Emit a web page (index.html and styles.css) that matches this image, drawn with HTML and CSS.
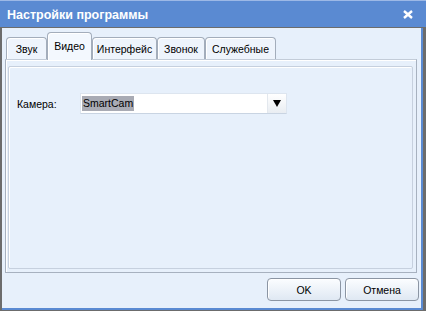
FILE: index.html
```html
<!DOCTYPE html>
<html lang="ru">
<head>
    <meta charset="UTF-8">
    <title>Настройки программы</title>
    <link rel="stylesheet" href="styles.css">
</head>
<body>
    <div class="window">
        <div class="titlebar">
            <span class="title">Настройки программы</span>
            <svg class="close" width="10" height="9" viewBox="0 0 10 9">
                <path d="M1 1 L9 8 M9 1 L1 8" stroke="#fff" stroke-width="2.4"/>
            </svg>
        </div>

        <div class="content">
            <div class="tabs">
                <div class="tab">Звук</div>
                <div class="tab active">Видео</div>
                <div class="tab">Интерфейс</div>
                <div class="tab">Звонок</div>
                <div class="tab">Служебные</div>
            </div>

            <div class="page">
                <div class="group">
                    <div class="row">
                        <label class="label">Камера:</label>
                        <div class="select">
                            <span class="value"><span class="selected">SmartCam</span></span>
                            <span class="arrow">
                                <svg width="8" height="7" viewBox="0 0 8 7"><path d="M0 0 H8 L4 7 Z" fill="#000"/></svg>
                            </span>
                        </div>
                    </div>
                </div>
            </div>

            <div class="buttons">
                <button class="btn">OK</button>
                <button class="btn">Отмена</button>
            </div>
        </div>
    </div>
</body>
</html>
```

FILE: styles.css
```css
* {
    box-sizing: border-box;
    margin: 0;
    padding: 0;
}
body {
    font-family: "Liberation Sans", Arial, sans-serif;
    font-size: 10.5px;
    background: #ffffff;
}
.window {
    width: 426px;
    height: 311px;
    display: flex;
    flex-direction: column;
    border: 2px solid #6c6c6c;
    border-top: 0;
    border-right-width: 3px;
    border-bottom-width: 1px;
    background: #e7f0fb;
    box-shadow: inset -2px -2px 0 #5a8ad2;
}
.titlebar {
    height: 28px;
    display: flex;
    align-items: center;
    justify-content: space-between;
    background: #5a8ad2;
    border-top: 1px solid #9cb8e6;
    border-bottom: 1px solid #6c6c6c;
    margin-left: -2px;
    margin-right: -3px;
    padding-left: 7px;
    padding-right: 13px;
}
.title {
    color: #fff;
    font-weight: bold;
    font-size: 12.5px;
    margin-top: 1px;
}
.close {
    display: block;
}
.content {
    flex: 1;
    display: flex;
    flex-direction: column;
    padding: 3px 6px 9px 3px;
}
.tabs {
    display: flex;
    align-items: flex-end;
    height: 28px;
    padding-left: 1px;
    position: relative;
    z-index: 1;
}
.tab {
    height: 22px;
    padding-top: 5px;
    text-align: center;
    border: 1px solid #a3adbb;
    border-bottom: 0;
    border-radius: 4px 4px 0 0;
    background: #eef4fc;
    color: #000;
    box-shadow: inset 1px 1px 0 #fff;
}
.tab:nth-child(1) { width: 41px; }
.tab:nth-child(2) { width: 45px; }
.tab:nth-child(3) { width: 65px; }
.tab:nth-child(4) { width: 48px; }
.tab:nth-child(5) { width: 71px; }
.tab.active {
    height: 28px;
    padding-top: 7px;
    background: #f3f8fe;
    margin-bottom: -1px;
}
.page {
    flex: 1;
    border: 1px solid #a7b1bf;
    border-top-color: #c3ccd8;
    box-shadow: inset 1px 1px 0 #fff;
    padding: 6px 3px 3px 2px;
}
.group {
    height: 100%;
    border: 1px solid #c6d0de;
    border-radius: 2px;
    box-shadow: inset 1px 1px 0 #fff;
    padding: 26px 8px 0 8px;
}
.row {
    display: flex;
    align-items: center;
}
.label {
    width: 63px;
}
.select {
    width: 207px;
    height: 21px;
    display: flex;
    background: #fff;
    border: 1px solid #dde5ef;
    border-bottom-color: #c9d4e2;
}
.value {
    flex: 1;
    display: flex;
    align-items: center;
    padding-left: 1px;
}
.selected {
    background: #a9abb4;
    line-height: 15px;
    padding: 0 1px;
}
.arrow {
    width: 19px;
    display: flex;
    align-items: center;
    justify-content: center;
    border-left: 1px solid #e3e8ee;
    background: linear-gradient(#ffffff, #e9edf2);
}
.buttons {
    display: flex;
    justify-content: flex-end;
    gap: 4px;
    padding-top: 5px;
    margin-right: -2px;
}
.btn {
    width: 74px;
    height: 23px;
    font-family: "Liberation Sans", Arial, sans-serif;
    font-size: 10.5px;
    color: #000;
    border: 1px solid #8b95a3;
    border-radius: 4px;
    background: linear-gradient(#fbfdff, #dfe8f3);
    box-shadow: inset 1px 1px 0 #fff;
}
```
